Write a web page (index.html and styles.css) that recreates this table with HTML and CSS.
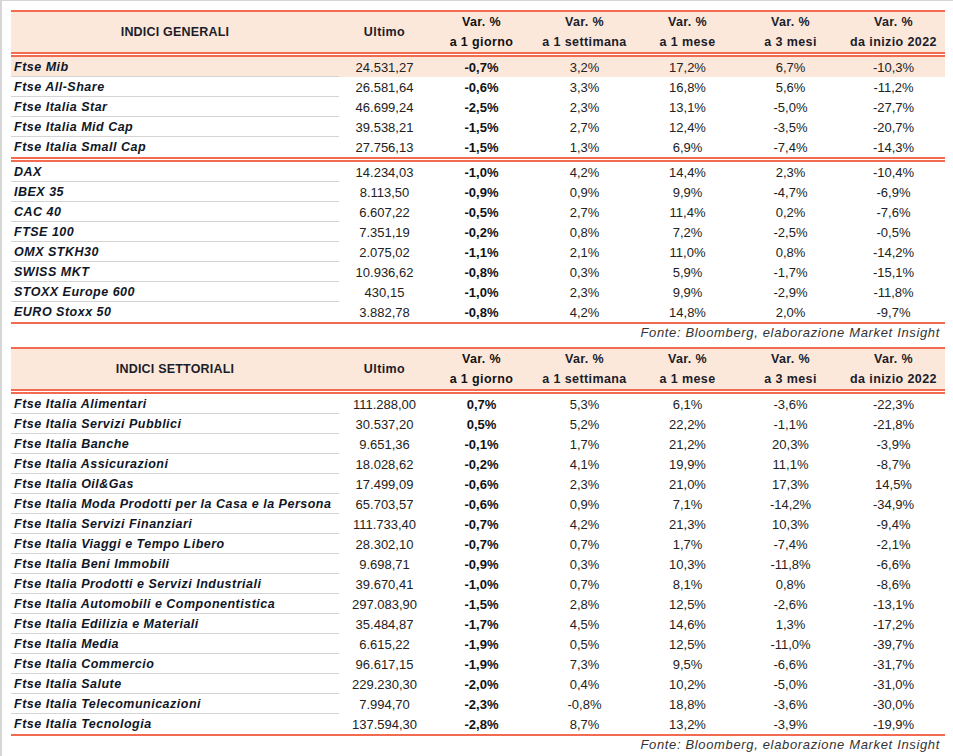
FILE: index.html
```html
<!DOCTYPE html>
<html lang="it">
<head>
<meta charset="utf-8">
<title>Indici</title>
<link rel="stylesheet" href="styles.css">
</head>
<body>
<div class="frame">
  <div class="tbl">
    <div class="row head">
      <div class="name">INDICI GENERALI</div>
      <div>Ultimo</div>
      <div>Var. %<br>a 1 giorno</div>
      <div>Var. %<br>a 1 settimana</div>
      <div>Var. %<br>a 1 mese</div>
      <div>Var. %<br>a 3 mesi</div>
      <div>Var. %<br>da inizio 2022</div>
    </div>
    <div class="sep"></div>
    <div class="row hl"><div class="name">Ftse Mib</div><div>24.531,27</div><div>-0,7%</div><div>3,2%</div><div>17,2%</div><div>6,7%</div><div>-10,3%</div></div>
    <div class="row"><div class="name">Ftse All-Share</div><div>26.581,64</div><div>-0,6%</div><div>3,3%</div><div>16,8%</div><div>5,6%</div><div>-11,2%</div></div>
    <div class="row"><div class="name">Ftse Italia Star</div><div>46.699,24</div><div>-2,5%</div><div>2,3%</div><div>13,1%</div><div>-5,0%</div><div>-27,7%</div></div>
    <div class="row"><div class="name">Ftse Italia Mid Cap</div><div>39.538,21</div><div>-1,5%</div><div>2,7%</div><div>12,4%</div><div>-3,5%</div><div>-20,7%</div></div>
    <div class="row last"><div class="name">Ftse Italia Small Cap</div><div>27.756,13</div><div>-1,5%</div><div>1,3%</div><div>6,9%</div><div>-7,4%</div><div>-14,3%</div></div>
    <div class="sep"></div>
    <div class="row"><div class="name">DAX</div><div>14.234,03</div><div>-1,0%</div><div>4,2%</div><div>14,4%</div><div>2,3%</div><div>-10,4%</div></div>
    <div class="row"><div class="name">IBEX 35</div><div>8.113,50</div><div>-0,9%</div><div>0,9%</div><div>9,9%</div><div>-4,7%</div><div>-6,9%</div></div>
    <div class="row"><div class="name">CAC 40</div><div>6.607,22</div><div>-0,5%</div><div>2,7%</div><div>11,4%</div><div>0,2%</div><div>-7,6%</div></div>
    <div class="row"><div class="name">FTSE 100</div><div>7.351,19</div><div>-0,2%</div><div>0,8%</div><div>7,2%</div><div>-2,5%</div><div>-0,5%</div></div>
    <div class="row"><div class="name">OMX STKH30</div><div>2.075,02</div><div>-1,1%</div><div>2,1%</div><div>11,0%</div><div>0,8%</div><div>-14,2%</div></div>
    <div class="row"><div class="name">SWISS MKT</div><div>10.936,62</div><div>-0,8%</div><div>0,3%</div><div>5,9%</div><div>-1,7%</div><div>-15,1%</div></div>
    <div class="row"><div class="name">STOXX Europe 600</div><div>430,15</div><div>-1,0%</div><div>2,3%</div><div>9,9%</div><div>-2,9%</div><div>-11,8%</div></div>
    <div class="row last"><div class="name">EURO Stoxx 50</div><div>3.882,78</div><div>-0,8%</div><div>4,2%</div><div>14,8%</div><div>2,0%</div><div>-9,7%</div></div>
  </div>
  <p class="src">Fonte: Bloomberg, elaborazione Market Insight</p>

  <div class="tbl">
    <div class="row head">
      <div class="name">INDICI SETTORIALI</div>
      <div>Ultimo</div>
      <div>Var. %<br>a 1 giorno</div>
      <div>Var. %<br>a 1 settimana</div>
      <div>Var. %<br>a 1 mese</div>
      <div>Var. %<br>a 3 mesi</div>
      <div>Var. %<br>da inizio 2022</div>
    </div>
    <div class="sep"></div>
    <div class="row"><div class="name">Ftse Italia Alimentari</div><div>111.288,00</div><div>0,7%</div><div>5,3%</div><div>6,1%</div><div>-3,6%</div><div>-22,3%</div></div>
    <div class="row"><div class="name">Ftse Italia Servizi Pubblici</div><div>30.537,20</div><div>0,5%</div><div>5,2%</div><div>22,2%</div><div>-1,1%</div><div>-21,8%</div></div>
    <div class="row"><div class="name">Ftse Italia Banche</div><div>9.651,36</div><div>-0,1%</div><div>1,7%</div><div>21,2%</div><div>20,3%</div><div>-3,9%</div></div>
    <div class="row"><div class="name">Ftse Italia Assicurazioni</div><div>18.028,62</div><div>-0,2%</div><div>4,1%</div><div>19,9%</div><div>11,1%</div><div>-8,7%</div></div>
    <div class="row"><div class="name">Ftse Italia Oil&amp;Gas</div><div>17.499,09</div><div>-0,6%</div><div>2,3%</div><div>21,0%</div><div>17,3%</div><div>14,5%</div></div>
    <div class="row"><div class="name">Ftse Italia Moda Prodotti per la Casa e la Persona</div><div>65.703,57</div><div>-0,6%</div><div>0,9%</div><div>7,1%</div><div>-14,2%</div><div>-34,9%</div></div>
    <div class="row"><div class="name">Ftse Italia Servizi Finanziari</div><div>111.733,40</div><div>-0,7%</div><div>4,2%</div><div>21,3%</div><div>10,3%</div><div>-9,4%</div></div>
    <div class="row"><div class="name">Ftse Italia Viaggi e Tempo Libero</div><div>28.302,10</div><div>-0,7%</div><div>0,7%</div><div>1,7%</div><div>-7,4%</div><div>-2,1%</div></div>
    <div class="row"><div class="name">Ftse Italia Beni Immobili</div><div>9.698,71</div><div>-0,9%</div><div>0,3%</div><div>10,3%</div><div>-11,8%</div><div>-6,6%</div></div>
    <div class="row"><div class="name">Ftse Italia Prodotti e Servizi Industriali</div><div>39.670,41</div><div>-1,0%</div><div>0,7%</div><div>8,1%</div><div>0,8%</div><div>-8,6%</div></div>
    <div class="row"><div class="name">Ftse Italia Automobili e Componentistica</div><div>297.083,90</div><div>-1,5%</div><div>2,8%</div><div>12,5%</div><div>-2,6%</div><div>-13,1%</div></div>
    <div class="row"><div class="name">Ftse Italia Edilizia e Materiali</div><div>35.484,87</div><div>-1,7%</div><div>4,5%</div><div>14,6%</div><div>1,3%</div><div>-17,2%</div></div>
    <div class="row"><div class="name">Ftse Italia Media</div><div>6.615,22</div><div>-1,9%</div><div>0,5%</div><div>12,5%</div><div>-11,0%</div><div>-39,7%</div></div>
    <div class="row"><div class="name">Ftse Italia Commercio</div><div>96.617,15</div><div>-1,9%</div><div>7,3%</div><div>9,5%</div><div>-6,6%</div><div>-31,7%</div></div>
    <div class="row"><div class="name">Ftse Italia Salute</div><div>229.230,30</div><div>-2,0%</div><div>0,4%</div><div>10,2%</div><div>-5,0%</div><div>-31,0%</div></div>
    <div class="row"><div class="name">Ftse Italia Telecomunicazioni</div><div>7.994,70</div><div>-2,3%</div><div>-0,8%</div><div>18,8%</div><div>-3,6%</div><div>-30,0%</div></div>
    <div class="row last"><div class="name">Ftse Italia Tecnologia</div><div>137.594,30</div><div>-2,8%</div><div>8,7%</div><div>13,2%</div><div>-3,9%</div><div>-19,9%</div></div>
  </div>
  <p class="src">Fonte: Bloomberg, elaborazione Market Insight</p>
</div>
</body>
</html>
```

FILE: styles.css
```css
html, body {
  margin: 0;
  padding: 0;
  background: #ffffff;
}

body {
  font-family: "Liberation Sans", Arial, sans-serif;
  color: #222222;
}

.frame {
  border-top: 1px solid #d6d6d6;
  border-left: 2px solid #d6d6d6;
  padding: 9px 0 0 9px;
  min-height: 756px;
  box-sizing: border-box;
}

.tbl {
  width: 934px;
  border-top: 2px solid #f26a50;
  border-bottom: 2px solid #f26a50;
}

.row {
  display: grid;
  grid-template-columns: 328px 91px repeat(5, 103px);
  height: 20px;
  align-items: center;
  font-size: 13px;
  line-height: 19px;
}

.row > div {
  text-align: center;
}

.row > div:nth-child(3) {
  font-weight: bold;
  color: #111111;
}

.row > .name {
  text-align: left;
  padding-left: 3px;
  padding-top: 2px;
  height: 20px;
  box-sizing: border-box;
  border-bottom: 1px solid #d4d4d4;
  font-weight: bold;
  font-style: italic;
  color: #101626;
  font-size: 12.5px;
  line-height: 17px;
  letter-spacing: 0.5px;
  white-space: nowrap;
}

.row.last > .name {
  border-bottom: 0;
}

.hl {
  background: #fce8da;
}

.head {
  height: 40px;
  background: #fce8da;
  font-weight: bold;
  color: #1b1d2a;
  font-size: 12.5px;
}

.head > div {
  line-height: 20px;
  letter-spacing: 0.4px;
}

.head > .name {
  text-align: center;
  font-style: normal;
  border-bottom: 0;
  height: 40px;
  line-height: 40px;
  padding: 0;
  letter-spacing: 0.2px;
  color: #1b1d2a;
}

.sep {
  height: 5px;
  box-sizing: border-box;
  border-top: 2px solid #f26a50;
  border-bottom: 2px solid #f26a50;
}

.src {
  margin: 0 0 6px 0;
  width: 929px;
  height: 16px;
  line-height: 16px;
  padding-top: 1px;
  text-align: right;
  font-style: italic;
  font-size: 13px;
  letter-spacing: 0.65px;
  color: #333333;
}
```
